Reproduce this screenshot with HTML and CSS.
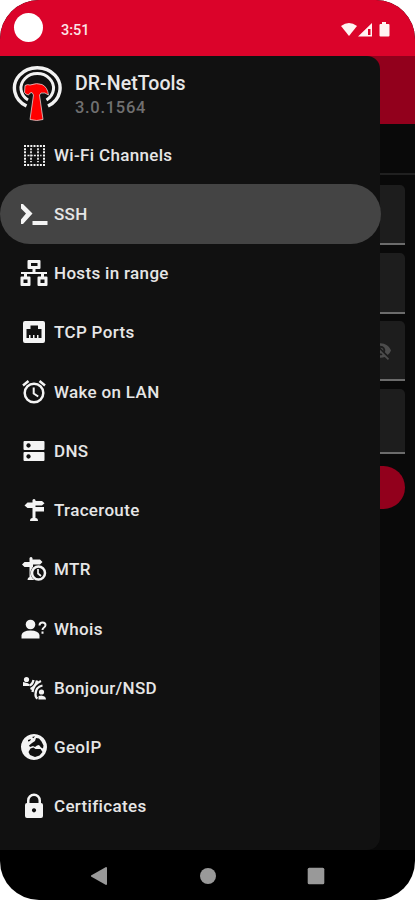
FILE: index.html
```html
<!DOCTYPE html>
<html lang="en">
<head>
  <meta charset="UTF-8" />
  <meta name="viewport" content="width=device-width, initial-scale=1.0"/>
  <title>DR-NetTools</title>
  <link rel="stylesheet" href="styles.css">
</head>
<body>
  <div class="phone">
    <header class="status-bar">
      <span class="camera"></span>
      <span class="clock">3:51</span>
      <svg class="status-icons" viewBox="0 0 50 18">
        <path d="M1 5 Q9 -1 17 5 L9 15Z"/>
        <path fill-rule="evenodd" d="M18 15.500 L32 2 V15.500Z M28 8 h2.500 v6 h-2.500Z"/>
        <path d="M42 1 h4 v2 h2.500 q1 0 1 1 v10.500 q0 1 -1 1 h-8 q-1 0 -1 -1 V4 q0 -1 1 -1 H42Z"/>
      </svg>
    </header>

    <div class="screen">
      <main class="page">
        <div class="toolbar"></div>
        <div class="tabs"></div>
        <form class="fields">
          <div class="field"></div>
          <div class="field second"></div>
          <div class="field password">
            <svg class="eye" viewBox="0 0 24 24"><path d="M12 7a5 5 0 0 1 4.640 6.830l2.920 2.920A11.800 11.800 0 0 0 23 12C21.270 7.600 17 4.500 12 4.500c-1.400 0-2.740.25-3.980.7l2.160 2.160C10.740 7.130 11.350 7 12 7zM2 4.270l2.740 2.740A11.800 11.800 0 0 0 1 12c1.730 4.400 6 7.500 11 7.500 1.550 0 3.030-.3 4.380-.84L19.730 22 21 20.730 3.270 3zM7.530 9.800l1.550 1.550a3 3 0 0 0 3.570 3.570l1.550 1.550A5 5 0 0 1 7.530 9.800zm4.310-.78 3.150 3.150.02-.16a3 3 0 0 0-3-3z"/></svg>
          </div>
          <div class="field tall"></div>
          <div class="connect"></div>
        </form>
      </main>

      <nav class="drawer">
        <div class="drawer-header">
          <svg class="logo" viewBox="0 0 50 56">
            <g fill="none" stroke="#f2f2f2">
              <path stroke-width="3.400" d="M14.500 41 A22.800 20.300 0 1 1 36 41"/>
              <path stroke-width="3" d="M16 35 A16.300 14.500 0 1 1 34.500 35"/>
            </g>
            <path fill="#f00" stroke="#eee" stroke-width=".7" d="M13 20.500 q2.500 -1.500 5 -.5 q7 -2.500 12 -.5 q5.500 2.500 6.500 10.500 q-3.500 -3 -7.500 -2 l-1.500 2 l3.500 24.500 q-6 2 -13 0 l3.500 -24.500 l-1.500 -2.500 q-2.500 0 -3.500 2.500 q-2.500 -.5 -4 -2.500Z"/>
          </svg>
          <div>
            <div class="app-name">DR-NetTools</div>
            <div class="version">3.0.1564</div>
          </div>
        </div>
        <ul class="menu">
          <li class="item">
            <svg class="icon" viewBox="0 0 28 28"><g fill="none" stroke="currentColor" stroke-width="2" stroke-dasharray="2 1.170"><path d="M4 5h21M4 24h21M5 4v21M24 4v21"/><path stroke-width="1.700" d="M7.500 14.500h14M11 7.200v14M18 7.200v14"/></g></svg>
            <span>Wi-Fi Channels</span>
          </li>
          <li class="item active">
            <svg class="icon" viewBox="0 0 28 28"><path d="M1 4 L3 4 L12.500 13.500 L3 24 L1 24 V19.500 L6 13.500 L1 8.500Z M12.500 21h15v4h-15z"/></svg>
            <span>SSH</span>
          </li>
          <li class="item">
            <svg class="icon" viewBox="0 0 28 28"><path fill-rule="evenodd" d="M8.500 1h11q1 0 1 1v7q0 1-1 1h-4v3H27v2h-3v2.500h2.500q1 0 1 1v7.500q0 1-1 1h-8q-1 0-1-1V18.500q0-1 1-1H21V15H7v2.500h2.500q1 0 1 1V26q0 1-1 1h-8q-1 0-1-1V18.500q0-1 1-1H4V15H1v-2h11.500v-3h-4q-1 0-1-1V2q0-1 1-1z M11 4v3h6.500V4z M3.500 20.500v3.500h4v-3.500z M20.500 20.500v3.500h4v-3.500z"/></svg>
            <span>Hosts in range</span>
          </li>
          <li class="item">
            <svg class="icon" viewBox="0 0 28 28"><path fill-rule="evenodd" d="M5 3h18q2 0 2 2v18q0 2-2 2H5q-2 0-2-2V5q0-2 2-2z M6.500 11v9H9v-3h1.500v3H13v-3h1.500v3H17v-3h1.500v3h3v-9H18V7.500h-7.500v3.500z"/></svg>
            <span>TCP Ports</span>
          </li>
          <li class="item">
            <svg class="icon" viewBox="0 0 28 28"><g fill="none" stroke="currentColor" stroke-width="2.500"><circle cx="14" cy="15" r="9.300"/><path d="M3 7.500 8.500 3M19.500 3 25 7.500"/><path stroke-width="2" d="M13.700 9.500V15.500l4.500 3"/></g></svg>
            <span>Wake on LAN</span>
          </li>
          <li class="item">
            <svg class="icon" viewBox="0 0 28 28"><path fill-rule="evenodd" d="M4.500 4h19q1 0 1 1v7q0 1-1 1h-19q-1 0-1-1V5q0-1 1-1z M8.500 6.300a2.200 2.200 0 1 0 .01 0z M4.500 15h19q1 0 1 1v7q0 1-1 1h-19q-1 0-1-1v-7q0-1 1-1z M8.500 17.300a2.200 2.200 0 1 0 .01 0z"/></svg>
            <span>DNS</span>
          </li>
          <li class="item">
            <svg class="icon" viewBox="0 0 28 28"><path d="M12.500 4q1.500-2 3 0v1H22l2.500 2.200L22 9.500h-6.500V11H24v4.500h-8.500V22q2.500 0 2.500 3h-8q0-3 2.500-3V12H7.500L4.500 9.500 7.500 6.500h5z"/></svg>
            <span>Traceroute</span>
          </li>
          <li class="item">
            <svg class="icon" viewBox="0 0 28 28"><path d="M9.500 3q1.500-2 3 0v1.500H20L22.500 7 20 9.500H13V22h2.500v3H7.500q0-2.500 2-3V12H4.500L2 9.500 4.500 7h5z"/><circle class="cutout" cx="18.500" cy="18" r="8"/><g fill="none" stroke="currentColor" stroke-width="2.500"><circle cx="18.500" cy="18" r="6.500"/><path stroke-width="1.700" d="M18 14v4.500l3 2.500"/></g></svg>
            <span>MTR</span>
          </li>
          <li class="item">
            <svg class="icon" viewBox="0 0 28 28"><circle cx="10.500" cy="9.500" r="4.800"/><path d="M1.500 23.500V20q1-4.500 9-4.500t9 4.500v3.500z"/><path fill="none" stroke="currentColor" stroke-width="2" d="M19.500 10.500q0-3 3-3t3 2.500q0 1.500-1.500 2.500T22.500 15M22.500 16.500v2.300"/></svg>
            <span>Whois</span>
          </li>
          <li class="item">
            <svg class="icon" viewBox="0 0 28 28"><circle cx="6.500" cy="5.500" r="2.600"/><circle cx="21.500" cy="18" r="2.600"/><path d="M3 12V8l5 1.200q1.500.5 1.500 2.800zM18.500 25.500v-3.500l3-.5 3 1q1.500 1 1.500 3z"/><g fill="none" stroke="currentColor" stroke-width="2.300"><path d="M9.500 11.500q3-1 4-5.500M10.500 15q5-2 6.500-8.500M12.500 18q1-8 8.500-11M15.500 20.500q0-7.500 7-9M17.500 24.500q-2-1-2-4"/></g></svg>
            <span>Bonjour/NSD</span>
          </li>
          <li class="item">
            <svg class="icon" viewBox="0 0 28 28"><path fill-rule="evenodd" d="M14 1a13 13 0 1 0 .01 0z M10.500 15.500l3-1 2 1.500h5l2 3-3 3.500-4.500 1.500-5-2-1.500-3z M12 10l3-2 1-3 3 .5 2.500 3 2 4-.5 3-2-1-2-2.500-2 .5-2 1.500-2-1-3 1-1-1.500z M8 7l3-1-1 2-2 .5z M12 4l3-.8-1.500 2z"/></svg>
            <span>GeoIP</span>
          </li>
          <li class="item">
            <svg class="icon" viewBox="0 0 28 28"><path fill-rule="evenodd" d="M7 11V8.500a7 7 0 0 1 14 0V11q2 0 2 2v11q0 2-2 2H7q-2 0-2-2V13q0-2 2-2z M9.500 11h9V8.500a4.500 4.500 0 0 0-9 0z M14 16.200a2.100 2.100 0 1 0 .01 0z"/></svg>
            <span>Certificates</span>
          </li>
        </ul>
      </nav>
    </div>

    <footer class="nav-bar">
      <svg viewBox="0 0 18 20"><path d="M16 1 Q17 1 17 2 V18 Q17 19 16 19 L1 10.500 V9.500Z"/></svg>
      <svg viewBox="0 0 18 20"><circle cx="9" cy="10" r="8"/></svg>
      <svg viewBox="0 0 18 20"><rect x=".7" y="1.700" width="16.600" height="16.600" rx="1.500"/></svg>
    </footer>
  </div>
</body>
</html>
```

FILE: styles.css
```css
* {
  box-sizing: border-box;
}

html, body {
  margin: 0;
  padding: 0;
  background: white;
  font-family: Roboto, sans-serif;
  overflow: hidden;
}

.phone {
  width: 415px;
  height: 900px;
  display: flex;
  flex-direction: column;
  background: #000;
  border-radius: 39px;
  overflow: hidden;
}

.status-bar {
  height: 56px;
  padding: 0 25px 0 14px;
  display: flex;
  align-items: center;
  background: #db032a;
  color: #fbe4e6;
}

.camera {
  width: 29px;
  height: 29px;
  margin-bottom: 2px;
  border-radius: 50%;
  background: white;
}

.clock {
  margin: 5px auto 0 18px;
  font-size: 14.5px;
  font-weight: 500;
}

.status-icons {
  width: 50px;
  height: 18px;
  margin-top: 4px;
  fill: #fff3f2;
}

.screen {
  position: relative;
  height: 794px;
}

.page {
  height: 100%;
  background: #090909;
}

.toolbar {
  height: 68px;
  background: #92001c;
}

.tabs {
  height: 51px;
  border-bottom: 2px solid #202020;
}

.fields {
  padding: 10px 10px 0;
  display: flex;
  flex-direction: column;
  gap: 8px;
}

.field {
  height: 60px;
  background: #1d1d1d;
  border-bottom: 2px solid #6b6b6b;
  border-radius: 5px 5px 0 0;
}

.second {
  height: 61px;
}

.password {
  display: flex;
  justify-content: flex-end;
  align-items: center;
  margin-top: -1px;
  padding-right: 13px;
}

.eye {
  width: 23px;
  height: 23px;
  fill: #4c4c4c;
}

.tall {
  height: 65px;
}

.connect {
  height: 43px;
  margin-top: 4px;
  border-radius: 22px;
  background: #92001c;
}

.drawer {
  position: absolute;
  top: 0;
  left: 0;
  width: 380px;
  height: 100%;
  background: #111;
  border-radius: 0 13px 13px 0;
}

.drawer-header {
  height: 69px;
  padding: 9px 0 0 12px;
  display: flex;
  gap: 13px;
}

.logo {
  width: 50px;
  height: 56px;
}

.app-name {
  padding-top: 7px;
  font-size: 19.500px;
  line-height: 23px;
  font-weight: 500;
  letter-spacing: 0.05px;
  color: #e8e8e8;
}

.version {
  font-size: 16.5px;
  line-height: 25px;
  font-weight: 500;
  letter-spacing: 0.7px;
  color: #707070;
}

.menu {
  margin: 0;
  padding: 0;
  list-style: none;
}

.item {
  height: 59.25px;
  padding-left: 20px;
  display: flex;
  align-items: center;
  gap: 6px;
  font-size: 17px;
  font-weight: 500;
  letter-spacing: 0.33px;
  color: #e6e6e6;
}

.active {
  width: 381px;
  background: #444;
  border-radius: 30px;
}

.icon {
  width: 28px;
  height: 28px;
  color: #f4f4f4;
  fill: currentColor;
}

.cutout {
  fill: #111;
}

.nav-bar {
  height: 50px;
  padding: 1px 90px 0;
  display: flex;
  justify-content: space-between;
  align-items: center;
}

.nav-bar svg {
  width: 18px;
  height: 20px;
  fill: #999;
}
```
